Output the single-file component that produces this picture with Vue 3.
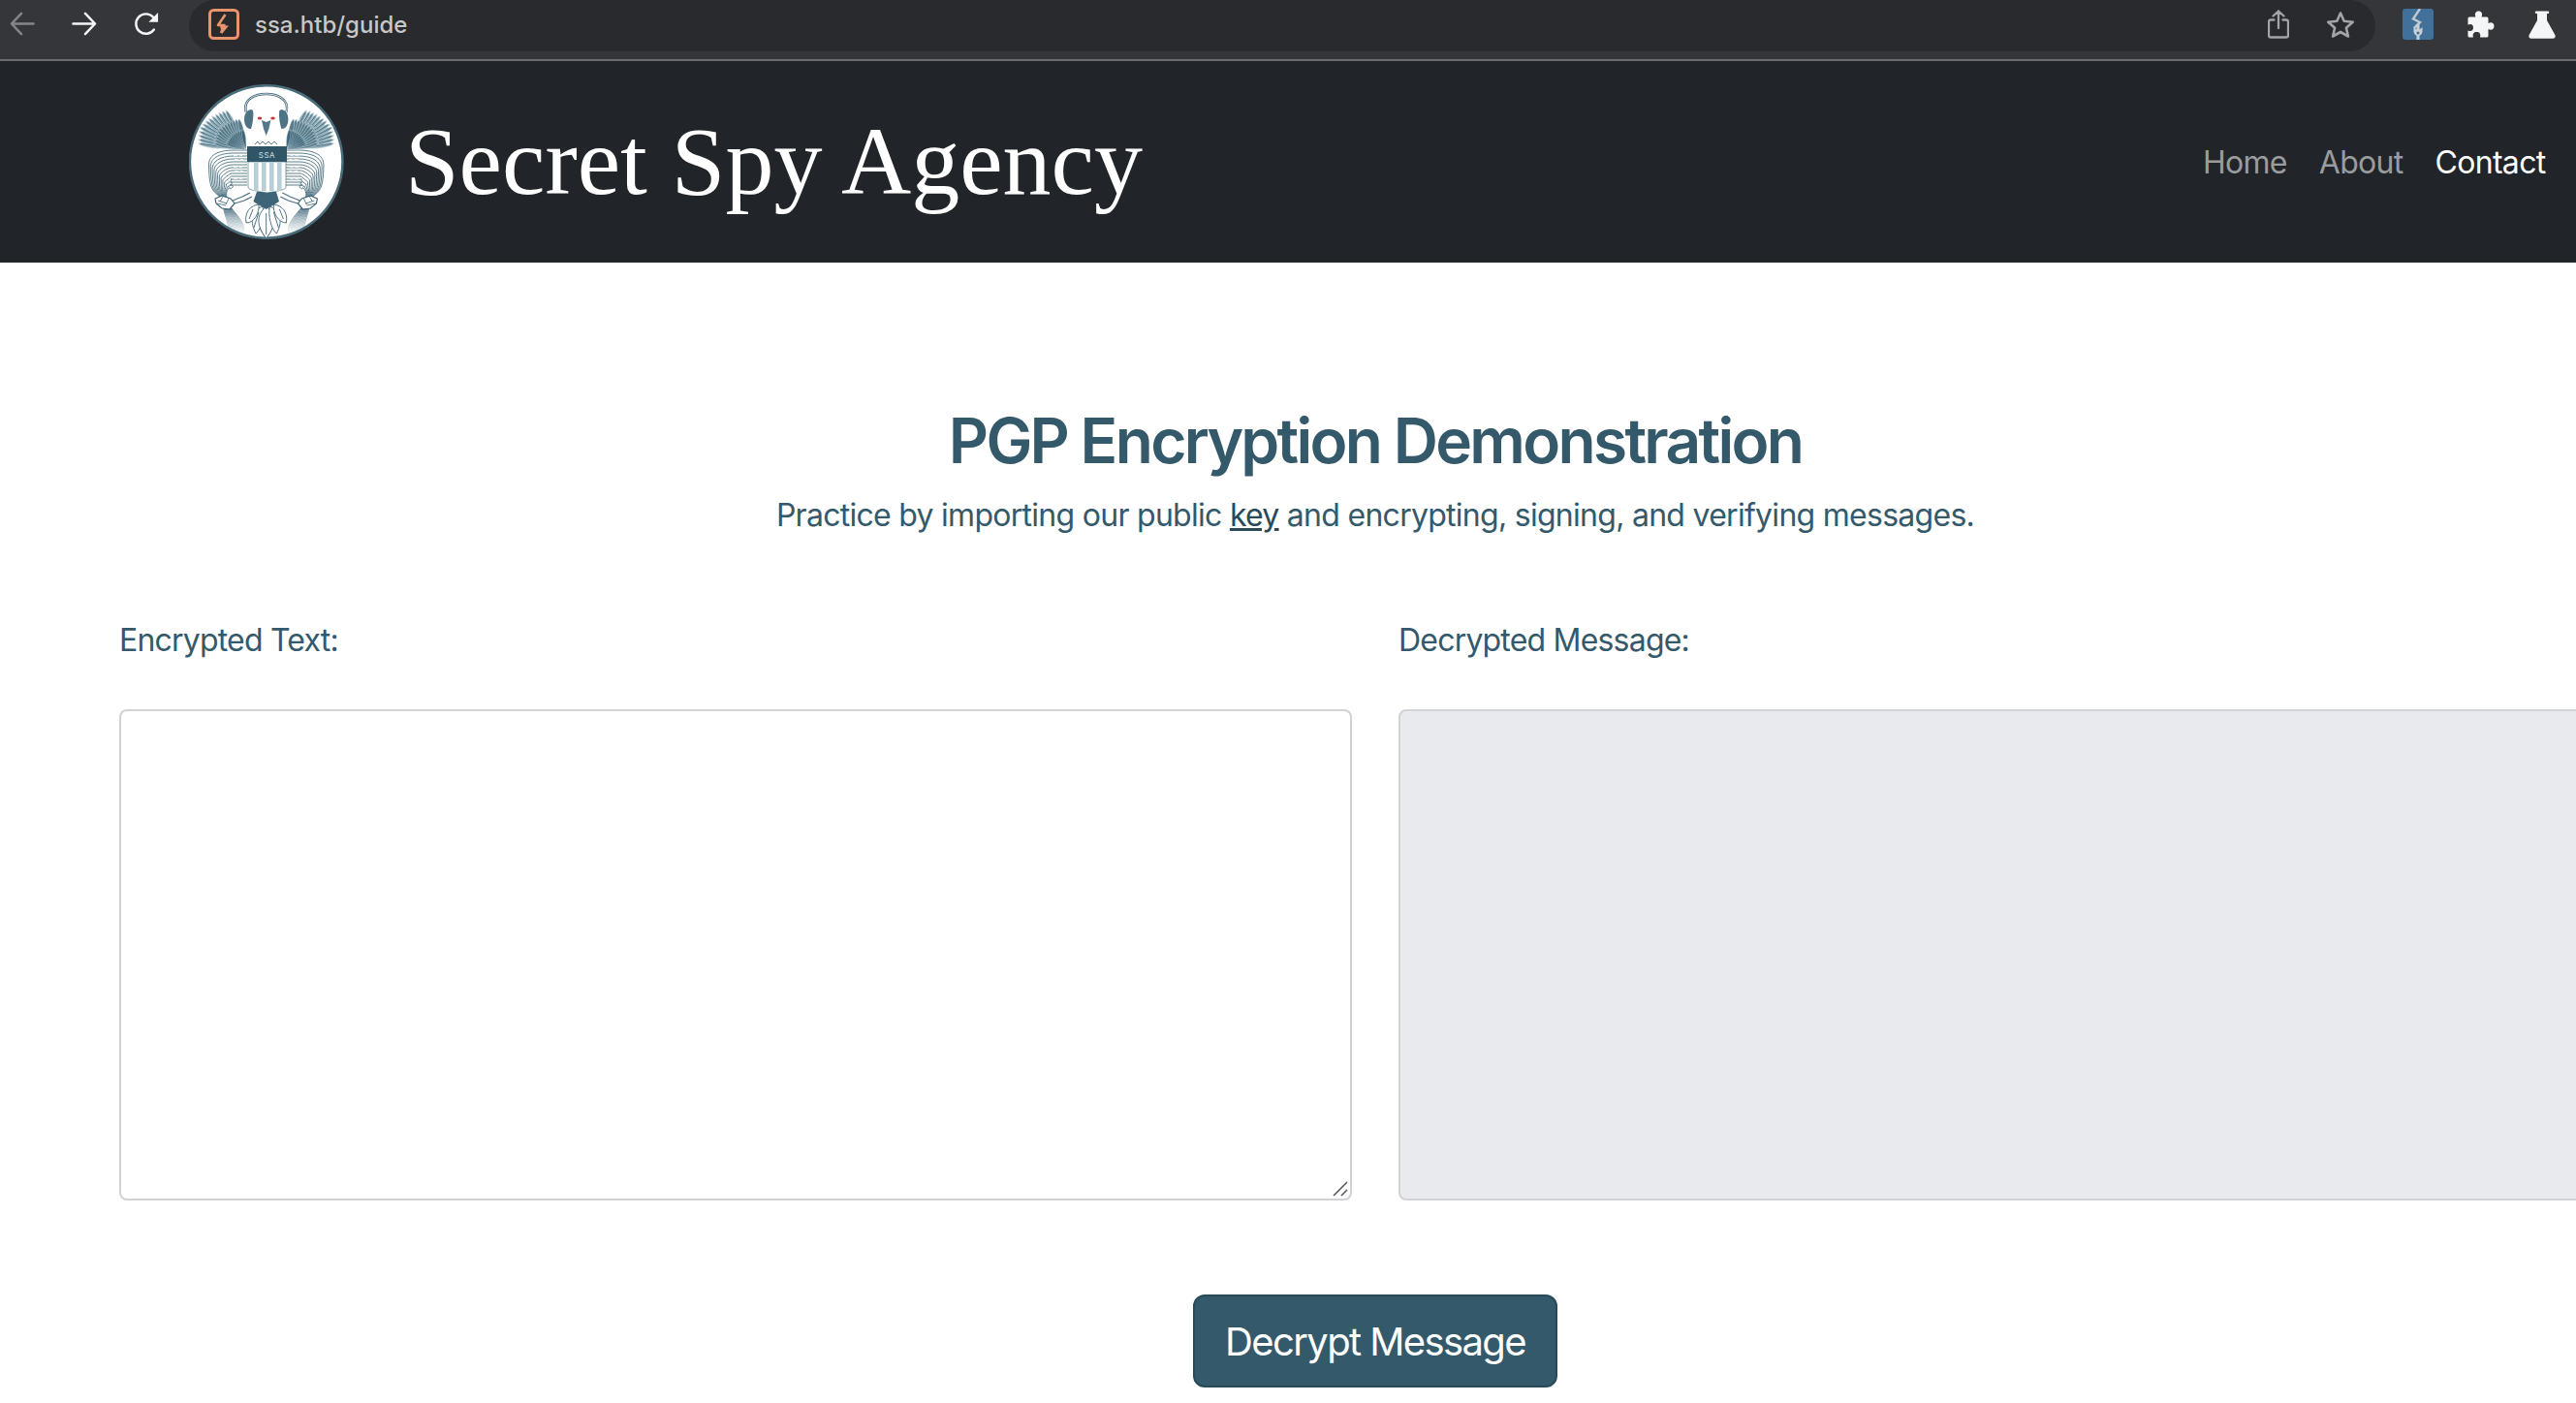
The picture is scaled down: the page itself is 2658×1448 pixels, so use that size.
<script setup>
function feather(rootR, tipR, deg, w, cx = 84, cy = 85) {
  const t = deg * Math.PI / 180
  const ux = Math.cos(t), uy = Math.sin(t)
  const nx = -uy, ny = ux
  const x0 = cx + ux * rootR, y0 = cy + uy * rootR
  const x1 = cx + ux * tipR, y1 = cy + uy * tipR
  const mx = x0 + (x1 - x0) * 0.8, my = y0 + (y1 - y0) * 0.8
  const f = (n) => n.toFixed(1)
  return {
    leaf: `M${f(x0)} ${f(y0)}Q${f(mx + nx * w)} ${f(my + ny * w)} ${f(x1)} ${f(y1)}Q${f(mx - nx * w)} ${f(my - ny * w)} ${f(x0)} ${f(y0)}Z`,
    rib: `M${f(x0)} ${f(y0)}L${f(x1 - ux * 3)} ${f(y1 - uy * 3)}`
  }
}
const outer = [], middle = [], inner = []
for (let i = 0; i < 13; i++) {
  outer.push(feather(10, 54 - Math.abs(i - 4) * 0.9, -172 + i * 4.6, 5.4))
}
for (let i = 0; i < 13; i++) middle.push(feather(4, 37 - Math.abs(i - 5) * 0.5, -168 + i * 5.4, 4.6))
for (let i = 0; i < 11; i++) inner.push(feather(1, 22, -160 + i * 6, 3.6))

const cables = []
for (let i = 0; i < 13; i++) {
  const y = 85 + i * 3
  const out = 45 + i * 1.8
  cables.push(`M85 ${y} L${72 - i * 0.4} ${y} C${out + 8} ${y} ${out} ${y + 6} ${out + 0.5} ${y + 16 - i * 1.1} C${out + 1} ${127 - i * 0.4} ${50 + i} 127 ${58 + i * 0.5} 134`)
}
const dashes = []
for (let i = 0; i < 8; i++) {
  const y = 86.500 + i * 4
  dashes.push(`M${70 + (i % 3)} ${y}h4m2 0h3`)
}
const tassels = []
for (let i = 0; i < 13; i++) {
  tassels.push(`M${60 + i * 0.5} 141 C${61 + i * 0.9} 150 ${65 + i * 1.5} 158 ${67 + i * 1.25} 170`)
}
const tail = [
  'M104.700 143 C96 150 92 160 104.700 176 C117 160 113 150 104.700 143Z',
  'M101 143 C92 146 86 156 94 171 C100 166 103 152 101 143Z',
  'M97 141 C89 142 82 148 84 160 C92 160 98 150 97 141Z'
]
const stripes = [92, 100, 108, 116]
</script>

<template>
  <div class="window">
    <div class="toolbar">
      <div class="navBtns">
        <svg class="ico" viewBox="0 0 26 26" fill="none" stroke="#85868a" stroke-width="2.6" stroke-linecap="round" stroke-linejoin="round"><path d="M25 13H2M12 2 1.500 13 12 24"/></svg>
        <svg class="ico" viewBox="0 0 26 26" fill="none" stroke="#f4f5f6" stroke-width="2.6" stroke-linecap="round" stroke-linejoin="round"><path d="M1 13h23M14 2l10.500 11L14 24"/></svg>
        <svg class="ico" viewBox="0 0 28 26" fill="none"><path d="M22.500 19.500A11 11 0 1 1 21.500 5.500L24 8" stroke="#f4f5f6" stroke-width="2.6" stroke-linecap="round"/><path d="M27 0.500V11H16.500Z" fill="#f4f5f6"/></svg>
      </div>
      <div class="omni">
        <svg class="favicon" viewBox="0 0 32 32" fill="none"><rect x="1.500" y="1.500" width="29" height="29" rx="4" stroke="#e8946c" stroke-width="3"/><path d="M17.500 6 10 17h6.500l-3.500 8" stroke="#e8946c" stroke-width="2.600" stroke-linejoin="round"/><path d="M12 17.500h9l-7 8.500z" fill="#e8946c"/></svg>
        <span class="url">ssa.htb/guide</span>
        <span class="omniGap"></span>
        <svg class="share" viewBox="0 0 22 30" fill="none" stroke="#a3a4a7" stroke-width="2.300" stroke-linecap="round" stroke-linejoin="round"><path d="M6.500 10.500H3a2 2 0 0 0-2 2V26.500a2 2 0 0 0 2 2h16a2 2 0 0 0 2-2V12.500a2 2 0 0 0-2-2h-3.500M11 19V1.500M5.500 6.500 11 1.500l5.500 5"/></svg>
        <svg class="star" viewBox="0 0 30 28" fill="none" stroke="#a3a4a7" stroke-width="2.600" stroke-linejoin="round"><path d="M15 2.500l3.700 8.300 9 .9-6.800 6 2 8.800L15 22l-7.900 4.500 2-8.800-6.800-6 9-.9z"/></svg>
      </div>
      <div class="exts">
        <svg class="ext" viewBox="0 0 32 32"><rect width="32" height="32" rx="3" fill="#41709a"/><path d="M18 0l-7 10.500 7 3.500-6 6" fill="none" stroke="#bfc6cc" stroke-width="2.500"/><path d="M14.500 16h3v5.500l3-2.500v5a5 5 0 0 1-3 4v4h-3v-4a5 5 0 0 1-3-4v-5l3 2.500z" fill="#c9d0d5"/><circle cx="16" cy="25" r="1.500" fill="#41709a"/></svg>
        <svg class="puzzle" viewBox="0 0 29 28"><path d="M3 6.500h6.500C8 3 9.500 0.500 12.500 0.500S17 3 15.500 6.500H21a1.500 1.500 0 0 1 1.500 1.500v5c3-1.500 6-0.500 6 3s-3 4.500-6 3v7a1.500 1.500 0 0 1-1.500 1.500H14c1-3.500-.5-5.500-3.500-5.500S6 24 7 27.500H3A1.500 1.500 0 0 1 1.500 26v-5.500C5 22 7 20.500 7 17.500S5 13 1.500 14.500V8A1.500 1.500 0 0 1 3 6.500z" fill="#f4f5f6"/></svg>
        <svg class="flask" viewBox="0 0 28 29"><path d="M8 0.500h12a1.200 1.200 0 0 1 0 2.500h-1V10l8.300 15a2.500 2.500 0 0 1-2.200 3.800H2.900A2.500 2.500 0 0 1 .7 25L9 10V3H8a1.200 1.200 0 0 1 0-2.500z" fill="#f4f5f6"/></svg>
      </div>
    </div>

    <header class="header">
      <svg class="seal" viewBox="25 17 160 160">
        <defs>
          <linearGradient id="fade" gradientUnits="userSpaceOnUse" x1="0" y1="140" x2="0" y2="170">
            <stop offset="0" stop-color="#3d6577"/>
            <stop offset="1" stop-color="#3d6577" stop-opacity="0.050"/>
          </linearGradient>
          <g id="half">
            <g stroke="#3d6577" stroke-width="0.850" fill="none">
              <path v-for="(d, i) in cables" :key="i" :d="d"/>
            </g>
            <g stroke="#ffffff" stroke-width="0.700" fill="none">
              <path v-for="(d, i) in dashes" :key="i" :d="d"/>
            </g>
            <g fill="#8aa9b6" stroke="#ffffff" stroke-width="0.450">
              <path v-for="(p, i) in outer" :key="i" :d="p.leaf"/>
            </g>
            <g stroke="#3d6577" stroke-width="0.800" fill="none">
              <path v-for="(p, i) in outer" :key="i" :d="p.rib"/>
            </g>
            <g fill="#567c8c" stroke="#ffffff" stroke-width="0.400">
              <path v-for="(p, i) in middle" :key="i" :d="p.leaf"/>
            </g>
            <g fill="#3d6577" stroke="#c7d7dd" stroke-width="0.400">
              <path v-for="(p, i) in inner" :key="i" :d="p.leaf"/>
            </g>
            <g stroke="url(#fade)" stroke-width="1" fill="none">
              <path v-for="(d, i) in tassels" :key="i" :d="d"/>
            </g>
            <path d="M52 135l7-3 9 3 4 5-5 6-8-1-6-5z" fill="#fff" stroke="#3d6577" stroke-width="1.200"/>
            <path d="M55 137l9 3M54 140l9 2M60 133l-3 5M66 135l-3 6" stroke="#3d6577" stroke-width="0.800"/>
            <path d="M70 137 80 133l8-4M72 140l10-3 8-4" fill="none" stroke="#4d7384" stroke-width="1.300"/>
            <g fill="#ffffff" stroke="#3d6577" stroke-width="0.900">
              <path v-for="(d, i) in tail" :key="i" :d="d"/>
            </g>
            <path d="M97 149 92 165M91 146 87 156" stroke="#3d6577" stroke-width="0.900"/>
            <path d="M89 43c-5 1-7 5-7 10s2 10 7 10c2-6 3-14 2-19z" fill="#4d7384"/>
            <path d="M84 46C80 32 94 27 104.700 27" fill="none" stroke="#3d6577" stroke-width="2.400"/>
            <path d="M84 46C80 32 94 27 104.700 27" fill="none" stroke="#fff" stroke-width="0.800"/>
          </g>
        </defs>
        <circle cx="104.700" cy="97" r="78.800" fill="#ffffff" stroke="#4a6b7a" stroke-width="2.500"/>
        <use href="#half"/>
        <use href="#half" transform="translate(209.400 0) scale(-1 1)"/>
        <path d="M104.700 150v22" stroke="#3d6577" stroke-width="0.900"/>
        <path d="M95 128h20l3 10-13.300 8-13.300-8z" fill="#3d6577"/>
        <path d="M92 50c4-7 21-7 25 0 2 9 0 13-1 19l3 13H90l3-13c-1-6-3-10-1-19z" fill="#fff"/>
        <path d="M93 79l3-3 2 3 3-3 3 3 3-3 3 3 3-3 3 3" fill="none" stroke="#3d6577" stroke-width="0.800"/>
        <path d="M100 54l4.700 2 4.700-2-2 9-2.700 7-2.700-7z" fill="#55788a"/>
        <ellipse cx="98" cy="52" rx="2.300" ry="1.600" fill="#c8393a"/>
        <ellipse cx="111.500" cy="52" rx="2.300" ry="1.600" fill="#c8393a"/>
        <path d="M85 81h41v16H85z" fill="#2f5566"/>
        <text x="105.500" y="93" class="sealText" text-anchor="middle">SSA</text>
        <path d="M86 97h39v26c0 3-8 4-19.500 6C94 127 86 126 86 123z" fill="#fff" stroke="#3d6577" stroke-width="0.600"/>
        <rect v-for="x in stripes" :key="x" :x="x" y="97" width="4.600" height="30" fill="#b8cfd8"/>
      </svg>
      <h1 class="brand">Secret Spy Agency</h1>
      <nav class="nav">
        <a class="navItem">Home</a>
        <a class="navItem">About</a>
        <a class="navItem active">Contact</a>
      </nav>
    </header>

    <main class="main">
      <h2 class="title">PGP Encryption Demonstration</h2>
      <p class="lead">Practice by importing our public <a class="keyLink">key</a> and encrypting, signing, and verifying messages.</p>
      <div class="cols">
        <div class="col">
          <label class="label">Encrypted Text:</label>
          <div class="fieldWrap">
            <textarea class="field"></textarea>
            <svg class="grip" viewBox="0 0 16 16" fill="none" stroke="#555" stroke-width="1.500"><path d="M1 15 15 1M9 15l6-6"/></svg>
          </div>
        </div>
        <div class="col">
          <label class="label">Decrypted Message:</label>
          <div class="fieldWrap">
            <textarea class="field disabled" disabled></textarea>
          </div>
        </div>
      </div>
      <button class="btn">Decrypt Message</button>
    </main>
  </div>
</template>

<style scoped>
.window {
  width: 2658px;
  height: 1448px;
  overflow: hidden;
  background: #fff;
  font-family: Inter, "Liberation Sans", sans-serif;
}
.toolbar {
  height: 61px;
  background: #35363a;
  border-bottom: 2px solid #6b6c70;
  display: flex;
  align-items: flex-start;
  padding-left: 10px;
  padding-right: 21px;
}
.navBtns { display: flex; gap: 38px; padding-top: 12px; }
.ico { width: 26px; height: 25px; display: block; }
.omni {
  flex: 1;
  height: 53px;
  box-sizing: border-box;
  margin-left: 31px;
  border-radius: 27px;
  background: #292a2d;
  display: flex;
  align-items: center;
  padding: 0 21px 3px 20px;
}
.favicon { width: 32px; height: 32px; }
.url { margin-left: 16px; font-size: 24px; font-weight: 500; color: #c6c7c9; }
.omniGap { flex: 1; }
.share { width: 22px; height: 30px; margin-right: 38px; }
.star { width: 30px; height: 28px; }
.exts { display: flex; align-items: center; height: 50px; padding-left: 28px; }
.ext { width: 32px; height: 32px; }
.puzzle { width: 29px; height: 28px; margin-left: 34px; }
.flask { width: 28px; height: 29px; margin-left: 35px; }

.header {
  height: 208px;
  background: #212529;
  display: flex;
  align-items: center;
  padding: 0 15px 0 195px;
}
.seal { width: 160px; height: 160px; display: block; flex: none; }
.sealText { font-family: Inter, sans-serif; font-size: 8px; fill: #cfe0e6; letter-spacing: 0.5px; }
.brand {
  margin: 0 0 0 63px;
  font-family: "Liberation Serif", serif;
  font-weight: 400;
  font-size: 100px;
  line-height: 1;
  color: #fff;
  flex: 1;
  white-space: nowrap;
}
.nav { display: flex; }
.navItem { padding: 0 16.500px; font-size: 32px; letter-spacing: -0.7px; color: #9a9c9e; }
.navItem.active { color: #fff; }

.main {
  width: 2838px;
  box-sizing: border-box;
  padding: 0 123px;
  display: flex;
  flex-direction: column;
  align-items: center;
  color: #34596a;
}
.title {
  margin: 152px 0 0;
  font-size: 64px;
  line-height: 64px;
  font-weight: 600;
  letter-spacing: -2.7px;
  color: #34596a;
}
.lead { margin: 21px 0 0; font-size: 32px; line-height: 48px; letter-spacing: -0.72px; }
.keyLink { color: #2a4a59; text-decoration: underline; }
.cols { margin-top: 81px; width: 100%; display: flex; gap: 48px; }
.col { flex: 1; min-width: 0; }
.label { display: block; font-size: 32px; line-height: 48px; letter-spacing: -0.8px; margin-bottom: 47px; }
.fieldWrap { position: relative; height: 507px; }
.field {
  display: block;
  width: 100%;
  height: 100%;
  box-sizing: border-box;
  border: 2px solid #d0d2d6;
  border-radius: 8px;
  background: #fff;
  resize: none;
  outline: none;
}
.field.disabled { background: #e9eaee; }
.grip { position: absolute; right: 4px; bottom: 4px; width: 16px; height: 16px; }
.btn {
  margin-top: 97px;
  width: 376px;
  height: 96px;
  box-sizing: border-box;
  background: #34596a;
  border: 2px solid #2b4a58;
  border-radius: 12px;
  color: #fff;
  font-family: Inter, "Liberation Sans", sans-serif;
  font-size: 40px;
  letter-spacing: -1.6px;
}
</style>
